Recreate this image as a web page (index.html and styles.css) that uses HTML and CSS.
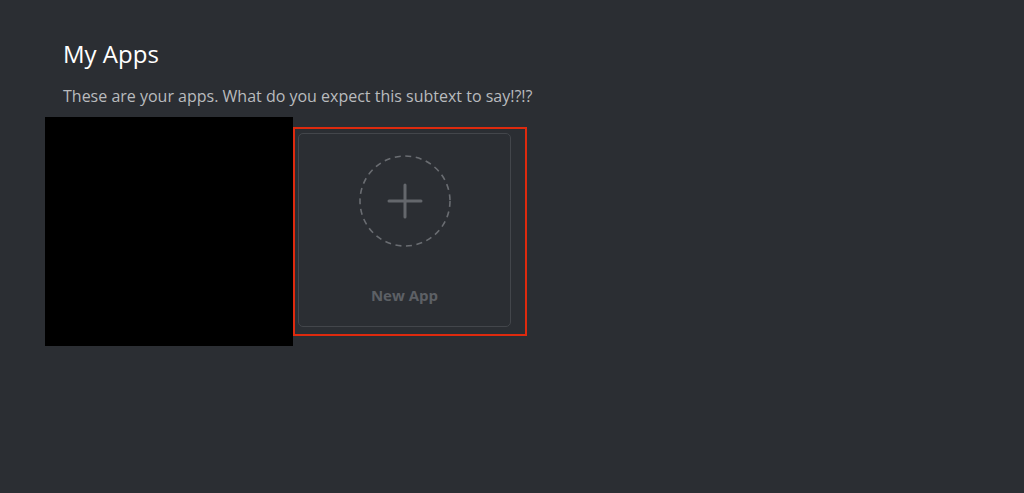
FILE: index.html
```html
<!DOCTYPE html>
<html>
    <head>
        <meta name="viewport" content="width=device-width, initial-scale=1.0">
        <title>My Apps</title>
        <link rel="stylesheet" href="styles.css">
    </head>
    <body>
        <div class="page">
            <h1 class="title">My Apps</h1>
            <p class="subtext">These are your apps. What do you expect this subtext to say!?!?</p>
            <div class="apps">
                <div class="redacted"></div>
                <div class="highlight">
                    <div class="newApp">
                        <svg class="plusCircle" width="92" height="92" viewBox="0 0 92 92">
                            <circle cx="46" cy="46" r="45" stroke="#6a6d72" stroke-width="1.6" stroke-dasharray="6 4.6" fill="none"/>
                            <path d="M46 30v32M30 46h32" stroke="#64676c" stroke-width="3" stroke-linecap="round" fill="none"/>
                        </svg>
                        <div class="newAppLabel">New App</div>
                    </div>
                </div>
            </div>
        </div>
    </body>
</html>
```

FILE: styles.css
```css
body{
    background-color: #2b2e33;
    margin: 0px;
    font-family: "Open Sans", "Noto Sans", sans-serif;
}
.page{
    padding: 38px 0px 0px 63px;
}
.title{
    color: #ffffff;
    font-size: 24px;
    font-weight: 400;
    line-height: 32px;
    margin: 0px;
}
.subtext{
    color: #b9bbbe;
    font-size: 16px;
    line-height: 20px;
    margin: 16px 0px 0px 0px;
}
.apps{
    display: flex;
    align-items: center;
    margin-left: -18px;
    margin-top: 11px;
}
.redacted{
    width: 248px;
    height: 229px;
    background-color: #000000;
}
.highlight{
    border: 2px solid #de2a0e;
    padding: 4px 14px 7px 3px;
}
.newApp{
    width: 211px;
    height: 192px;
    border: 1.5px solid #43464b;
    border-radius: 5px;
    display: flex;
    flex-direction: column;
    align-items: center;
}
.plusCircle{
    margin-top: 21px;
}
.newAppLabel{
    margin-top: 38px;
    color: #5d6065;
    font-size: 15px;
    font-weight: 700;
}
```
